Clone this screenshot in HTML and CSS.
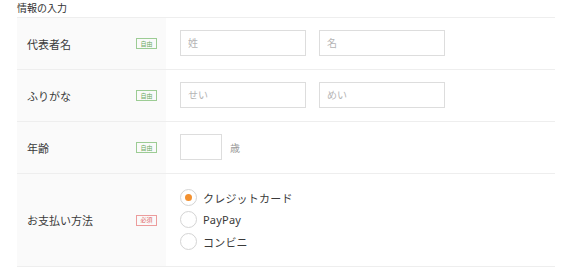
FILE: index.html
```html
<!DOCTYPE html>
<html lang="ja">
<head>
    <meta charset="utf-8">
    <meta name="viewport" content="width=device-width, initial-scale=1.0">
    <title>情報の入力</title>
    <link rel="stylesheet" href="styles.css">
</head>

<body>
    <h2 class="titel">情報の入力</h2>

    <div class="tabel">
        <div class="raekke">
            <div class="etiket">
                <span>代表者名</span>
                <span class="maerke fri">自由</span>
            </div>
            <div class="felt">
                <input type="text" class="navn" placeholder="姓">
                <input type="text" class="navn" placeholder="名">
            </div>
        </div>

        <div class="raekke">
            <div class="etiket">
                <span>ふりがな</span>
                <span class="maerke fri">自由</span>
            </div>
            <div class="felt">
                <input type="text" class="navn" placeholder="せい">
                <input type="text" class="navn" placeholder="めい">
            </div>
        </div>

        <div class="raekke">
            <div class="etiket">
                <span>年齢</span>
                <span class="maerke fri">自由</span>
            </div>
            <div class="felt">
                <input type="text" class="alder">
                <span class="enhed">歳</span>
            </div>
        </div>

        <div class="raekke">
            <div class="etiket">
                <span>お支払い方法</span>
                <span class="maerke kraevet">必須</span>
            </div>
            <div class="felt valg">
                <label class="radio"><span class="cirkel valgt"></span>クレジットカード</label>
                <label class="radio"><span class="cirkel"></span>PayPay</label>
                <label class="radio"><span class="cirkel"></span>コンビニ</label>
            </div>
        </div>
    </div>
</body>
</html>
```

FILE: styles.css
```css
* {
    box-sizing: border-box;
    font-family: "Noto Sans", "Noto Sans CJK JP", sans-serif;
}

body {
    margin: 0;
    padding: 0 15px 0 17px;
    background-color: #fff;
    color: #333;
}

.titel {
    margin: 0;
    height: 17px;
    font-size: 10px;
    font-weight: 400;
    line-height: 16px;
    color: #333;
}

.tabel {
    border-top: 1px solid #eee;
}

.raekke {
    display: flex;
    border-bottom: 1px solid #eee;
}

.etiket {
    width: 149px;
    flex-shrink: 0;
    display: flex;
    align-items: center;
    justify-content: space-between;
    padding: 0 9px 0 10px;
    background-color: #fafafa;
    font-size: 11px;
    color: #3a3a3a;
}

.maerke {
    display: inline-flex;
    align-items: center;
    justify-content: center;
    width: 21px;
    height: 11px;
    font-size: 6px;
    line-height: 1;
    border: 1px solid;
}

.fri {
    border-color: #9ccc94;
    color: #6aaa60;
}

.kraevet {
    border-color: #ec9c9c;
    color: #e06868;
}

.felt {
    display: flex;
    align-items: center;
    gap: 13px;
    padding: 12px 14px 13px;
}

input {
    height: 26px;
    border: 1px solid #ddd;
    border-radius: 0;
    padding: 0 7px;
    font-size: 10px;
    color: #333;
    outline: none;
}

input::placeholder {
    color: #b5b5b5;
}

.navn {
    width: 126px;
}

.alder {
    width: 42px;
}

.enhed {
    margin-left: -5px;
    font-size: 10px;
    color: #999;
}

.valg {
    flex-direction: column;
    align-items: flex-start;
    gap: 5px;
    padding: 15px 14px 16px;
}

.radio {
    display: flex;
    align-items: center;
    gap: 6px;
    height: 17px;
    font-size: 11px;
    letter-spacing: 0.2px;
    color: #3a3a3a;
}

.cirkel {
    width: 17px;
    height: 17px;
    border: 1px solid #d4d4d4;
    border-radius: 50%;
    background-color: #fff;
    display: flex;
    align-items: center;
    justify-content: center;
}

.cirkel.valgt::after {
    content: "";
    width: 7px;
    height: 7px;
    border-radius: 50%;
    background-color: #f39130;
}
```
